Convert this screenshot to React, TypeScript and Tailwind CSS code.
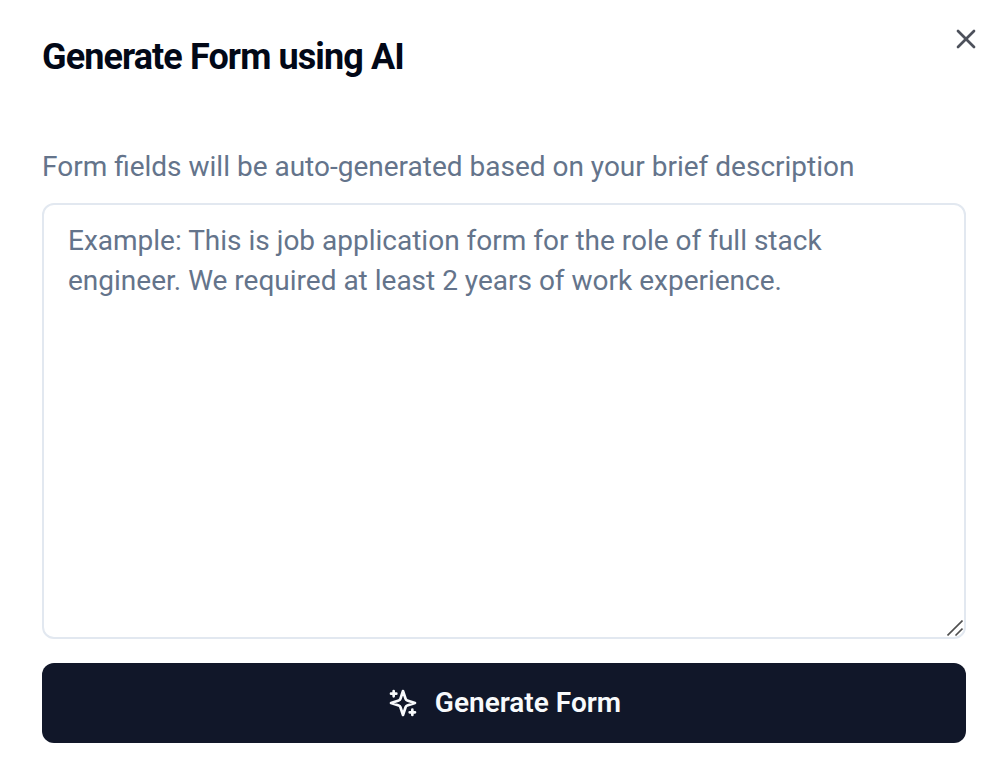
import React, { useState } from "react";
import { X } from "lucide-react";

function SparklesIcon() {
  return (
    <svg aria-hidden="true" viewBox="0 0 24 24" fill="none" stroke="currentColor" strokeWidth="2" strokeLinecap="round" strokeLinejoin="round" className="size-8 shrink-0">
      <path d="m12 3-1.912 5.813a2 2 0 0 1-1.275 1.275L3 12l5.813 1.912a2 2 0 0 1 1.275 1.275L12 21l1.912-5.813a2 2 0 0 1 1.275-1.275L21 12l-5.813-1.912a2 2 0 0 1-1.275-1.275L12 3Z" />
      <path d="M5 3v4M3 5h4M19 17v4M17 19h4" />
    </svg>
  );
}

function ResizeGrip() {
  return (
    <svg aria-hidden="true" viewBox="0 0 16 16" fill="none" stroke="#505050" strokeWidth="1.6" className="pointer-events-none absolute right-[3px] bottom-[3px] size-4">
      <path d="M.5 15.5l15-15M8.5 15.5l7-7" />
    </svg>
  );
}

export default function App() {
  const [description, setDescription] = useState("");
  return (
    <main className="relative min-h-screen bg-white pt-[39px] pr-[38px] pl-[42px] font-['Roboto',sans-serif] text-[#020817]">
      <h1 className="text-4xl leading-9 font-bold tracking-tight">Generate Form using AI</h1>
      <button type="button" aria-label="Close" className="absolute top-[23px] right-[22px] opacity-70">
        <X className="size-8" />
      </button>
      <form className="mt-[72px]" onSubmit={(e) => e.preventDefault()}>
        <label htmlFor="description" className="block text-[28px] leading-10 text-[#64748b]">
          Form fields will be auto-generated based on your brief description
        </label>
        <div className="relative mt-4">
          <textarea
            id="description"
            value={description}
            onChange={(e) => setDescription(e.target.value)}
            placeholder="Example: This is job application form for the role of full stack engineer. We required at least 2 years of work experience."
            className="block h-[436px] w-full resize-y rounded-xl border-2 border-[#e2e8f0] px-6 py-4 text-[28px] leading-10 placeholder:text-[#64748b] [&::-webkit-resizer]:bg-transparent"
          />
          <ResizeGrip />
        </div>
        <button type="submit" className="mt-6 flex h-20 w-full items-center justify-center gap-4 rounded-xl bg-[#111729] text-[28px] leading-10 font-semibold text-slate-50">
          <SparklesIcon />
          Generate Form
        </button>
      </form>
    </main>
  );
}
